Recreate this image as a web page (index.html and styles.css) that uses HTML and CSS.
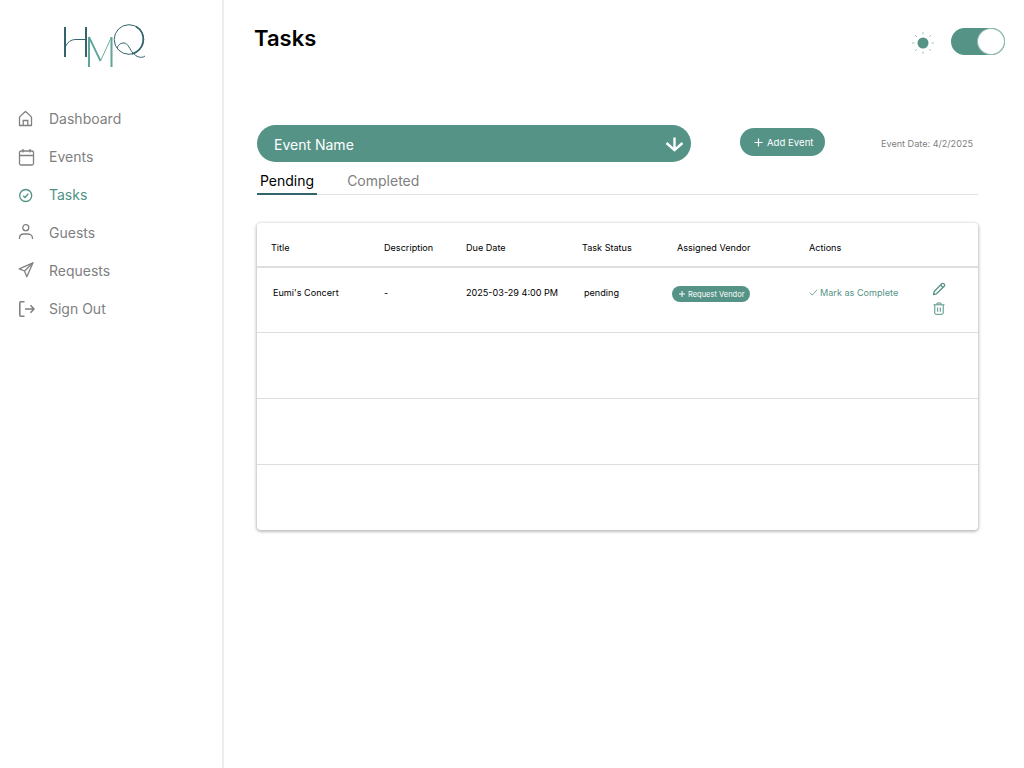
FILE: index.html
```html
<!DOCTYPE html>
<html lang="en">
<head>
<meta charset="utf-8">
<title>Tasks</title>
<link rel="stylesheet" href="styles.css">
</head>
<body>
<div class="app">
  <aside class="sidebar">
    <div class="logo">
      <svg width="84" height="50" viewBox="63 20 84 50" role="img" aria-label="HMQ" fill="none">
        <path d="M65 27V57M86 27V57" stroke="#33646b" stroke-width="2"/>
        <path d="M65 48C67 42 71 39.500 76 39.500L86 39.500" stroke="#33646b" stroke-width="1"/>
        <path d="M89 37V67M111.500 37V67" stroke="#5fa598" stroke-width="2"/>
        <path d="M89 37L100.500 61" stroke="#5fa598" stroke-width="1.800"/>
        <path d="M100.500 61L111.500 37" stroke="#5fa598" stroke-width="0.900"/>
        <circle cx="129" cy="39.500" r="14.800" stroke="#33646b" stroke-width="1"/>
        <path d="M136 26.500C142 30 144 36 143 42C142 47 138 52 132 54" stroke="#33646b" stroke-width="1.500"/>
        <path d="M117 48C119 44 121 43 124 43C128 43 130 50 133 53C136 56.500 141 59 145 56" stroke="#33646b" stroke-width="1"/>
      </svg>
    </div>
    <nav class="nav">
      <a class="nav-item">
        <svg class="nav-icon" viewBox="0 0 18 18" fill="none" stroke="currentColor" stroke-width="1.300"><path d="M2.500 15.500V7.500C2.500 6.500 8.500 1.500 8.500 1.500C8.500 1.500 14.500 6.500 14.500 7.500V15.500Z" stroke-linejoin="round"/><path d="M6.200 15.500V10.500H10.800V15.500"/></svg>
        <span>Dashboard</span>
      </a>
      <a class="nav-item">
        <svg class="nav-icon" viewBox="0 0 18 18" fill="none" stroke="currentColor" stroke-width="1.300"><rect x="2.500" y="3" width="14" height="14" rx="1.500"/><path d="M2.500 7.500H16.500M6 1V4.500M13 1V4.500"/></svg>
        <span>Events</span>
      </a>
      <a class="nav-item active">
        <svg class="nav-icon" viewBox="0 0 18 18" fill="none" stroke="currentColor" stroke-width="1.300"><circle cx="8.700" cy="9.500" r="6"/><path d="M6.200 9.700L8 11.500L11.300 7.800"/></svg>
        <span>Tasks</span>
      </a>
      <a class="nav-item">
        <svg class="nav-icon" viewBox="0 0 18 18" fill="none" stroke="currentColor" stroke-width="1.300"><circle cx="8.800" cy="3.700" r="3"/><path d="M2.500 15V14C2.500 11.500 4.500 10 7 10H10.500C13 10 15.500 11.500 15.500 14V15"/></svg>
        <span>Guests</span>
      </a>
      <a class="nav-item">
        <svg class="nav-icon" viewBox="0 0 18 18" fill="none" stroke="currentColor" stroke-width="1.300"><path d="M16 0.800L2.200 6.800L7.500 9L9.800 14.800Z" stroke-linejoin="round"/><path d="M7.500 9L16 0.800"/></svg>
        <span>Requests</span>
      </a>
      <a class="nav-item">
        <svg class="nav-icon" viewBox="0 0 18 18" fill="none" stroke="currentColor" stroke-width="1.600"><path d="M7.500 1.800H3.800C3 1.800 2.800 2.300 2.800 3V15C2.800 15.700 3 16.200 3.800 16.200H7.500"/><path d="M8 9H17M13.500 5.300L17 9L13.500 12.700"/></svg>
        <span>Sign Out</span>
      </a>
    </nav>
  </aside>

  <main class="main">
    <header class="topbar">
      <h1 class="title">Tasks</h1>
      <div class="theme">
        <svg class="sun" width="22" height="22" viewBox="0 0 22 22" fill="none" stroke="#a9c9c2" stroke-width="1"><circle cx="11" cy="11" r="5.500" fill="#559386" stroke="none"/><path d="M11 0V2.500M11 19.500V22M0 11H2.500M19.500 11H22M3 3L5 5M17 17L19 19M3 19L5 17M17 5L19 3"/></svg>
        <div class="toggle"><span class="knob"></span></div>
      </div>
    </header>

    <section class="content">
      <div class="event-row">
        <div class="event-select">
          <span>Event Name</span>
          <svg width="19" height="15" viewBox="0 0 19 15" fill="none" stroke="#fff" stroke-width="2.400"><path d="M9.500 0.500V13M1.500 6L9.500 13.200L17.500 6"/></svg>
        </div>
        <button class="add-event">
          <svg width="9" height="9" viewBox="0 0 9 9" stroke="#fff" stroke-width="1.200"><path d="M4.500 0.500V8.500M0.500 4.500H8.500"/></svg>
          <span>Add Event</span>
        </button>
        <div class="event-date">Event Date: 4/2/2025</div>
      </div>

      <div class="tabs">
        <div class="tab current">Pending</div>
        <div class="tab">Completed</div>
      </div>

      <div class="table">
        <div class="row head">
          <div>Title</div>
          <div>Description</div>
          <div>Due Date</div>
          <div>Task Status</div>
          <div>Assigned Vendor</div>
          <div>Actions</div>
        </div>
        <div class="row body first">
          <div class="nudge-title">Eumi's Concert</div>
          <div>-</div>
          <div>2025-03-29 4:00 PM</div>
          <div class="nudge-status">pending</div>
          <div class="vendor-cell">
            <button class="request">
              <svg width="6" height="6" viewBox="0 0 6 6" stroke="#fff" stroke-width="1"><path d="M3 0V6M0 3H6"/></svg>
              <span>Request Vendor</span>
            </button>
          </div>
          <div class="actions">
            <div class="complete">
              <svg width="9" height="7" viewBox="0 0 10 8" fill="none" stroke="#559386" stroke-width="0.900"><path d="M0.800 4.200L3.500 7L9.200 0.800"/></svg>
              <span>Mark as Complete</span>
            </div>
            <div class="row-icons">
              <svg width="14" height="14" viewBox="0 0 14 14" fill="none" stroke="#559386" stroke-width="1.300"><path d="M1.500 12.500L2.200 9.500L9.800 1.800C10.400 1.200 11.300 1.200 11.900 1.800L12.200 2.100C12.800 2.700 12.800 3.600 12.200 4.200L4.500 11.800Z" stroke-linejoin="round"/><path d="M8.500 3L11 5.500"/></svg>
              <svg width="12" height="13" viewBox="0 0 12 13" fill="none" stroke="#559386" stroke-width="1"><path d="M0.500 2.800H11.500M4 2.500V1H8V2.500M1.800 3V11.200C1.800 11.800 2.200 12.300 2.800 12.300H9.200C9.800 12.300 10.200 11.800 10.200 11.200V3M4.700 5.500V9.800M7.300 5.500V9.800"/></svg>
            </div>
          </div>
        </div>
        <div class="row body"></div>
        <div class="row body"></div>
        <div class="row body last"></div>
      </div>
    </section>
  </main>
</div>
</body>
</html>
```

FILE: styles.css
```css
* { box-sizing: border-box; }

html, body {
  margin: 0;
  height: 100%;
  background: #fff;
  font-family: Inter, "Liberation Sans", sans-serif;
  color: #000;
}

button {
  font-family: inherit;
  border: 0;
  color: #fff;
  background: #559386;
}

.app {
  display: flex;
  height: 768px;
  overflow: hidden;
}

.sidebar {
  width: 224px;
  flex: none;
  border-right: 2px solid #ededed;
}

.logo {
  display: flex;
  justify-content: flex-start;
  padding: 20px 0 0 63px;
  height: 100px;
}

.nav {
  display: flex;
  flex-direction: column;
}

.nav-item {
  display: flex;
  align-items: center;
  height: 38px;
  padding-left: 17px;
  gap: 14px;
  font-size: 14px;
  line-height: 38px;
  color: #808080;
}

.nav-item.active { color: #4f9384; }

.nav-icon {
  width: 18px;
  height: 18px;
  flex: none;
}

.main {
  flex: 1;
  min-width: 0;
}

.topbar {
  display: flex;
  justify-content: space-between;
  align-items: flex-start;
  height: 125px;
  padding: 24px 19px 0 30px;
}

.title {
  margin: 0;
  font-size: 22px;
  line-height: 28px;
  font-weight: 600;
}

.theme {
  display: flex;
  align-items: center;
  gap: 17px;
  margin-top: 4px;
}

.sun { margin-top: 2px; }

.toggle {
  display: flex;
  justify-content: flex-end;
  width: 54px;
  height: 27px;
  border-radius: 14px;
  background: #559386;
}

.knob {
  width: 28px;
  height: 27px;
  border-radius: 50%;
  background: #fff;
  border: 1px solid #8fb9b0;
}

.content {
  padding: 0 46px 0 33px;
}

.event-row {
  display: flex;
  align-items: flex-start;
}

.event-select {
  display: flex;
  justify-content: space-between;
  align-items: center;
  width: 434px;
  height: 37px;
  padding: 1px 7px 0 17px;
  border-radius: 19px;
  background: #559386;
  color: #fff;
  font-size: 14px;
}

.add-event {
  display: flex;
  align-items: center;
  gap: 4px;
  width: 85px;
  height: 28px;
  margin: 3px 0 0 49px;
  padding: 0 0 0 14px;
  border-radius: 14px;
  font-size: 9.600px;
}

.event-date {
  margin: 13px 0 0 56px;
  font-size: 9.100px;
  line-height: 11px;
  color: #808080;
}

.tabs {
  display: flex;
  gap: 27px;
  height: 33px;
  margin-top: 0;
  border-bottom: 1px solid #e3e3e3;
}

.tab {
  padding: 10px 3px 0;
  height: 33px;
  font-size: 14px;
  line-height: 17px;
  color: #808080;
}

.tab.current {
  color: #000;
  border-bottom: 2px solid #33646b;
}

.table {
  margin-top: 28px;
  height: 307px;
  border-radius: 4px;
  background: #fff;
  box-shadow: 0 1px 3px 1px rgba(0, 0, 0, 0.25);
}

.row {
  display: grid;
  grid-template-columns: 113px 82px 116px 95px 132px 1fr;
  align-items: center;
  padding-left: 14px;
  font-size: 9.100px;
  border-bottom: 1px solid #dedede;
}

.row.head {
  height: 45px;
  padding-top: 5px;
  border-bottom-width: 2px;
}

.row.body {
  height: 66px;
  padding-bottom: 16px;
}

.row.first { height: 65px; }

.row.last { border-bottom: 0; }

.nudge-title { margin-left: 2px; }
.nudge-status { margin-left: 2px; }
.vendor-cell { margin-left: -5px; padding-top: 4px; }

.request {
  display: flex;
  align-items: center;
  gap: 3px;
  height: 16px;
  padding: 0 5px 0 7px;
  border-radius: 8px;
  font-size: 7.500px;
}

.actions {
  display: flex;
  align-items: center;
}

.complete {
  display: flex;
  align-items: center;
  gap: 2px;
  width: 124px;
  color: #559386;
}

.row-icons {
  display: flex;
  flex-direction: column;
  align-items: center;
  gap: 6px;
  width: 12px;
  margin-top: 13px;
}
```
